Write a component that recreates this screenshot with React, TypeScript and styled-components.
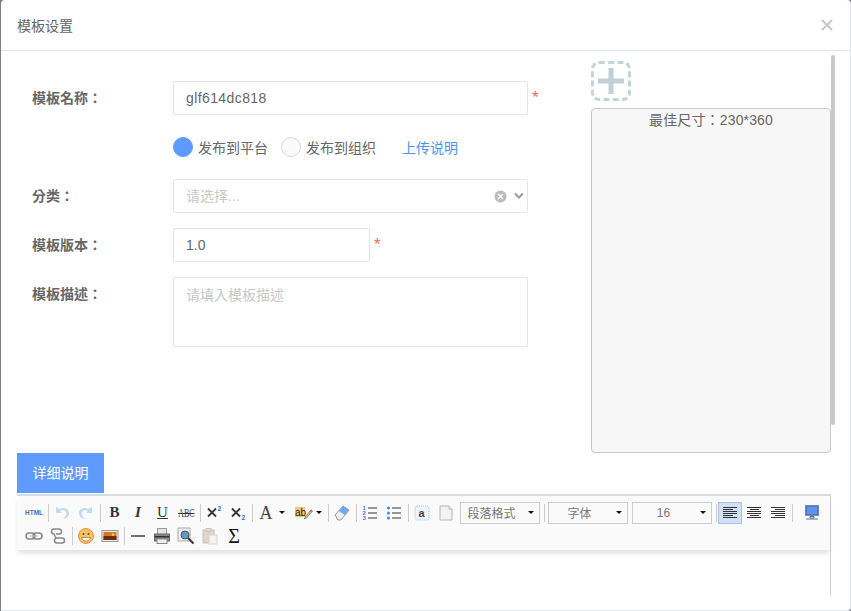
import React from 'react';
import styled, { createGlobalStyle } from 'styled-components';

const GlobalStyle = createGlobalStyle`
  html, body {
    margin: 0;
    height: 100%;
    overflow: hidden;
    background-color: #7f7f7f;
  }
  body {
    font-family: "Liberation Sans", "Noto Sans CJK TC", sans-serif;
    font-size: 14px;
    color: #666;
  }
`;

const Modal = styled.div`
  position: relative;
  box-sizing: border-box;
  width: 850px;
  height: 611px;
  margin-left: 1px;
  background-color: #fff;
  border-right: 1px solid #dfe5ef;
  border-bottom: 1px solid #dfe5ef;
  border-radius: 4px 4px 4px 0;
`;

const Header = styled.div`
  box-sizing: border-box;
  height: 51px;
  display: flex;
  align-items: center;
  justify-content: space-between;
  padding: 0 16px;
  border-bottom: 1px solid #dfe6ee;
`;

const Title = styled.div`
  font-size: 14px;
  color: #666;
`;

const Close = styled.svg`
  width: 12px;
  height: 12px;
  margin-right: 1px;
  stroke: #c8c8c8;
  stroke-width: 2;
`;

const Body = styled.div`
  position: relative;
  height: 402px;
  display: flex;
`;

const ScrollThumb = styled.div`
  position: absolute;
  top: 4px;
  left: 830px;
  width: 4px;
  height: 370px;
  background-color: #c9c9c9;
  border-radius: 2px;
`;

const Form = styled.div`
  width: 590px;
  box-sizing: border-box;
  padding: 30px 0 0 31px;
`;

const Row = styled.div`
  display: flex;
  align-items: center;
  height: 34px;
  margin-bottom: 15px;
`;

const TallRow = styled(Row)`
  height: 70px;
  align-items: flex-start;
`;

const Label = styled.label`
  flex: none;
  width: 141px;
  font-weight: bold;
  color: #666;
  line-height: 34px;
`;

const Input = styled.div<{ $width: number; $tracking?: number }>`
  box-sizing: border-box;
  width: ${(p) => p.$width}px;
  height: 34px;
  line-height: 32px;
  padding: 0 12px;
  border: 1px solid #e1e6ee;
  border-radius: 2px;
  color: #666;
  letter-spacing: ${(p) => p.$tracking ?? 0}px;
`;

const Star = styled.span`
  margin: 0 0 1px 4px;
  color: #f8685c;
  font-size: 17px;
  line-height: 17px;
`;

const Radios = styled.div`
  display: flex;
  align-items: center;
  margin-left: 141px;
`;

const Radio = styled.span<{ $on?: boolean }>`
  box-sizing: border-box;
  width: 20px;
  height: 20px;
  margin-right: 5px;
  border-radius: 50%;
  border: 1px solid ${(p) => (p.$on ? '#5f9bff' : '#d9d9d9')};
  background-color: ${(p) => (p.$on ? '#5f9bff' : '#fafafa')};
`;

const RadioText = styled.span`
  margin-right: 13px;
  color: #666;
`;

const HelpLink = styled.a`
  margin-left: 13px;
  color: #4b94f5;
`;

const Select = styled(Input)`
  display: flex;
  align-items: center;
  justify-content: space-between;
  color: #c8c8c8;
  padding-right: 3px;
`;

const SelectIcons = styled.div`
  display: flex;
  align-items: center;
  gap: 7px;
`;

const TextArea = styled.div`
  box-sizing: border-box;
  width: 355px;
  height: 70px;
  padding: 6px 12px;
  border: 1px solid #e1e6ee;
  border-radius: 2px;
  color: #c8c8c8;
`;

const Side = styled.div`
  width: 240px;
  padding-top: 10px;
`;

const AddBox = styled.div`
  box-sizing: border-box;
  width: 40px;
  height: 40px;
  margin-bottom: 7px;
  border: 3px dashed #c3d4da;
  border-radius: 8px;
  display: flex;
  align-items: center;
  justify-content: center;
`;

const Preview = styled.div`
  box-sizing: border-box;
  height: 345px;
  background-color: #f7f7f7;
  border: 1px solid #c8c8c8;
  border-radius: 4px;
  text-align: center;
  color: #666;
  line-height: 22px;
  letter-spacing: 0.15px;
`;

const Tab = styled.div`
  width: 87px;
  height: 40px;
  margin-left: 16px;
  line-height: 40px;
  text-align: center;
  color: #fff;
  background-color: #5f9bff;
`;

const Editor = styled.div`
  box-sizing: border-box;
  width: 814px;
  height: 102px;
  margin: 1px 0 0 16px;
  border-top: 2px solid #d8dbe0;
  border-right: 1px solid #cfcfcf;
`;

const Toolbar = styled.div`
  box-sizing: border-box;
  height: 54px;
  padding: 5px 0 0 5px;
  background-color: #fafafa;
  box-shadow: 0 4px 5px -1px rgba(0, 0, 0, 0.13);
`;

const ToolRow = styled.div`
  display: flex;
  align-items: center;
  height: 23px;
`;

const Tool = styled.div<{ $active?: boolean; $wide?: boolean; $gap?: number; $offset?: number }>`
  box-sizing: border-box;
  flex: none;
  width: ${(p) => (p.$wide ? 36 : 24)}px;
  height: 22px;
  margin-left: ${(p) => p.$offset ?? 0}px;
  display: flex;
  align-items: center;
  justify-content: center;
  gap: ${(p) => p.$gap ?? 3}px;
  background-color: ${(p) => (p.$active ? '#d3e0f4' : 'transparent')};
  border: 1px solid ${(p) => (p.$active ? '#a6c3ea' : 'transparent')};
`;

const Sep = styled.div`
  flex: none;
  width: 1px;
  height: 18px;
  margin: 0 1px 0 2px;
  background-color: #ccc;
`;

const Glyph = styled.span<{ $size?: number; $color?: string; $nudge?: number }>`
  font-family: "Liberation Serif", serif;
  font-weight: bold;
  font-size: ${(p) => p.$size ?? 15}px;
  line-height: 1;
  color: ${(p) => p.$color ?? '#333'};
  margin-left: ${(p) => p.$nudge ?? 0}px;
`;

const ItalicGlyph = styled(Glyph)`
  font-style: italic;
`;

const UnderGlyph = styled(Glyph)`
  text-decoration: underline;
  font-weight: normal;
`;

const LightGlyph = styled(Glyph)`
  font-weight: normal;
`;

const StrikeGlyph = styled(Glyph)`
  display: inline-block;
  flex: none;
  text-decoration: line-through;
  font-weight: normal;
  transform: scaleX(0.66);
`;

const HtmlGlyph = styled.span`
  font-family: "Liberation Sans", sans-serif;
  font-weight: bold;
  font-size: 6.5px;
  color: #3f74a8;
`;

const Caret = styled.span`
  width: 0;
  height: 0;
  border-left: 3px solid transparent;
  border-right: 3px solid transparent;
  border-top: 3px solid #111;
`;

const Combo = styled.div`
  box-sizing: border-box;
  flex: none;
  width: 80px;
  height: 22px;
  margin: 0 2px;
  padding: 0 5px 0 0;
  display: flex;
  align-items: center;
  border: 1px solid #ccc;
  font-size: 12px;
  color: #777;
`;

const ComboText = styled.span`
  flex: 1;
  text-align: center;
  padding-right: 6px;
`;

const Icon: React.FC<{ children: React.ReactNode }> = ({ children }) => (
  <svg width="18" height="18" viewBox="0 0 18 18" fill="none">
    {children}
  </svg>
);

const Undo = ({ flip }: { flip?: boolean }) => (
  <Icon>
    <g transform={flip ? 'matrix(-1 0 0 1 18 0)' : undefined}>
      <path d="M3 3v6h6L7 7c2-1.500 5-1 6 1 1 2 0 4-3 7 4-.500 6-3 6-6 0-4-5-6.500-9-4z" fill="#c4daed" />
    </g>
  </Icon>
);

const Super = ({ sub }: { sub?: boolean }) => (
  <Icon>
    <path d="M3 4.500l8 8M11 4.500l-8 8" stroke="#333" strokeWidth="1.800" />
    <text x="12.500" y={sub ? 16 : 6.500} fontSize="6.500" fontWeight="bold" fontFamily="Liberation Sans" fill="#2a6ae0">
      2
    </text>
  </Icon>
);

const Marker = () => (
  <Icon>
    <rect x="0" y="3" width="10" height="10" fill="#fbc56f" />
    <text x="0" y="12" fontSize="10" fontFamily="Liberation Sans" fill="#222">ab</text>
    <path d="M10 13l6-7 1.500 1-6 7-2 1z" fill="#e8c05a" stroke="#555" strokeWidth="0.6" />
    <path d="M15 7l1-1.500 1.500 1-1 1.500z" fill="#e55" />
  </Icon>
);

const Eraser = () => (
  <Icon>
    <path d="M2 11l8-9 6 4-8 10H5z" fill="#eee" stroke="#999" />
    <path d="M10 2l6 4-4 5-6-4z" fill="#6fa6ee" />
  </Icon>
);

const ListIcon = ({ dots }: { dots?: boolean }) => (
  <Icon>
    {dots ? (
      <g fill="#4a82e8">
        <circle cx="3.500" cy="4" r="1.500" />
        <circle cx="3.500" cy="9" r="1.500" />
        <circle cx="3.500" cy="14" r="1.500" />
      </g>
    ) : (
      <g fill="#3d7ae6" fontSize="6" fontWeight="bold" fontFamily="Liberation Sans">
        <text x="1.500" y="6">1</text>
        <text x="1.500" y="11">2</text>
        <text x="1.500" y="16">3</text>
      </g>
    )}
    <path d="M7 4h9M7 9h9M7 14h9" stroke="#333" strokeWidth="1" />
  </Icon>
);

const Anchor = () => (
  <Icon>
    <rect x="2" y="2" width="14" height="14" rx="2" stroke="#9dbcf0" strokeDasharray="1 1" fill="#eef3fb" />
    <text x="5.500" y="13" fontSize="11" fontWeight="bold" fontFamily="Liberation Sans" fill="#444">a</text>
  </Icon>
);

const Page = () => (
  <Icon>
    <path d="M3 2h9l3 3v11H3z" fill="#f2f3f6" stroke="#b5b5b5" />
    <path d="M12 2v3h3" stroke="#b5b5b5" fill="#fff" />
  </Icon>
);

const AlignIcon = ({ mode }: { mode: 'left' | 'center' | 'right' }) => {
  const short = { left: 'M2 5.500h10M2 11.500h10', center: 'M5 5.500h9M5 11.500h9', right: 'M6 5.500h10M6 11.500h10' }[mode];
  return (
    <Icon>
      <path d="M2 3.500h14M2 7.500h14M2 9.500h14M2 13.500h14" stroke="#333" />
      <path d={short} stroke="#333" />
    </Icon>
  );
};

const Monitor = () => (
  <Icon>
    <rect x="2.500" y="1.500" width="13" height="10" fill="#4a78d4" stroke="#7b8a9e" />
    <rect x="4" y="3" width="10" height="7" fill="#5f92e8" />
    <path d="M7 12.500h4v1.500H7zM3 15h12" stroke="#5c7390" />
  </Icon>
);

const LinkIcon = () => (
  <Icon>
    <rect x="1" y="6" width="9" height="6" rx="3" stroke="#888" strokeWidth="1.500" />
    <rect x="8" y="6" width="9" height="6" rx="3" stroke="#888" strokeWidth="1.500" />
    <path d="M5 9h8" stroke="#bbb" />
  </Icon>
);

const Unlink = () => (
  <Icon>
    <path d="M5 2h5a2.500 2.500 0 0 1 0 5H7M8 11h5a2.500 2.500 0 0 1 0 5H8a2.500 2.500 0 0 1 0-5" stroke="#888" strokeWidth="1.500" />
    <path d="M5 2a2.500 2.500 0 0 0 0 5l2 4" stroke="#888" strokeWidth="1.500" />
  </Icon>
);

const Smile = () => (
  <Icon>
    <circle cx="9" cy="9" r="7.500" fill="#f6c168" stroke="#dd9436" />
    <circle cx="6.500" cy="7" r="1" fill="#7a4a10" />
    <circle cx="11.500" cy="7" r="1" fill="#7a4a10" />
    <path d="M4.500 10.500h9c-.500 2.500-2 3.500-4.500 3.500s-4-1-4.500-3.500z" fill="#fff" stroke="#a76a1e" strokeWidth="0.7" />
  </Icon>
);

const Picture = () => (
  <Icon>
    <rect x="1" y="3.500" width="16" height="11" fill="#eee" stroke="#999" />
    <rect x="2.500" y="5" width="13" height="8" fill="#d9761f" />
    <rect x="2.500" y="9" width="13" height="4" fill="#6b2d0c" />
    <circle cx="12" cy="7.500" r="1.200" fill="#ffd47a" />
  </Icon>
);

const Rule = () => (
  <Icon>
    <path d="M2 9h14" stroke="#222" strokeWidth="1.300" />
  </Icon>
);

const Printer = () => (
  <Icon>
    <rect x="4.500" y="1.500" width="9" height="6" fill="#e6e6e6" stroke="#999" />
    <rect x="1.500" y="7" width="15" height="7" fill="#888" stroke="#666" />
    <rect x="1.500" y="9" width="15" height="1.500" fill="#333" />
    <rect x="4" y="12" width="10" height="4.500" fill="#eee" stroke="#888" />
  </Icon>
);

const Preview2 = () => (
  <Icon>
    <rect x="1" y="1" width="12" height="13" fill="#eef1f4" stroke="#aaa" />
    <circle cx="8" cy="8" r="4" fill="#5a9bc8" stroke="#555" />
    <path d="M11 11l5.500 5.500" stroke="#333" strokeWidth="2" />
  </Icon>
);

const Paste = () => (
  <Icon>
    <rect x="2" y="3" width="11" height="13" fill="#e4d3c8" stroke="#cbbdb3" />
    <rect x="5" y="1.500" width="5" height="3" fill="#ddd" stroke="#c5c5c5" />
    <rect x="8" y="8" width="8" height="9" fill="#f3f3f3" stroke="#d6d6d6" />
  </Icon>
);

const App: React.FC = () => (
  <Modal>
    <GlobalStyle />
    <Header>
      <Title>模板设置</Title>
      <Close viewBox="0 0 12 12">
        <path d="M1 1l10 10M11 1L1 11" />
      </Close>
    </Header>

    <Body>
      <Form>
        <Row>
          <Label>模板名称：</Label>
          <Input $width={355} $tracking={0.4}>glf614dc818</Input>
          <Star>*</Star>
        </Row>
        <Row>
          <Radios>
            <Radio $on />
            <RadioText>发布到平台</RadioText>
            <Radio />
            <RadioText>发布到组织</RadioText>
            <HelpLink>上传说明</HelpLink>
          </Radios>
        </Row>
        <Row>
          <Label>分类：</Label>
          <Select $width={355}>
            请选择...
            <SelectIcons>
              <svg width="13" height="13" viewBox="0 0 13 13">
                <circle cx="6.500" cy="6.500" r="6" fill="#bbb" />
                <path d="M4 4l5 5M9 4l-5 5" stroke="#fff" strokeWidth="1.500" />
              </svg>
              <svg width="10" height="8" viewBox="0 0 10 8" fill="none">
                <path d="M1 1.500l4 4 4-4" stroke="#999" strokeWidth="2" />
              </svg>
            </SelectIcons>
          </Select>
        </Row>
        <Row>
          <Label>模板版本：</Label>
          <Input $width={197}>1.0</Input>
          <Star>*</Star>
        </Row>
        <TallRow>
          <Label>模板描述：</Label>
          <TextArea>请填入模板描述</TextArea>
        </TallRow>
      </Form>

      <Side>
        <AddBox>
          <svg width="28" height="28" viewBox="0 0 28 28">
            <path d="M11.500 1h5v10.500H27v5H16.500V27h-5V16.500H1v-5h10.500z" fill="#bfd0d7" />
          </svg>
        </AddBox>
        <Preview>最佳尺寸：230*360</Preview>
      </Side>
      <ScrollThumb />
    </Body>

    <Tab>详细说明</Tab>

    <Editor>
      <Toolbar>
        <ToolRow>
          <Tool><HtmlGlyph>HTML</HtmlGlyph></Tool>
          <Sep />
          <Tool><Undo /></Tool>
          <Tool><Undo flip /></Tool>
          <Sep />
          <Tool><Glyph $nudge={1}>B</Glyph></Tool>
          <Tool><ItalicGlyph>I</ItalicGlyph></Tool>
          <Tool><UnderGlyph $nudge={1}>U</UnderGlyph></Tool>
          <Tool><StrikeGlyph $size={12} $nudge={1}>ABC</StrikeGlyph></Tool>
          <Sep />
          <Tool><Super /></Tool>
          <Tool><Super sub /></Tool>
          <Sep />
          <Tool $wide $gap={6}><LightGlyph $size={18} $color="#444">A</LightGlyph><Caret /></Tool>
          <Tool $wide><Marker /><Caret /></Tool>
          <Sep />
          <Tool><Eraser /></Tool>
          <Sep />
          <Tool><ListIcon /></Tool>
          <Tool><ListIcon dots /></Tool>
          <Sep />
          <Tool><Anchor /></Tool>
          <Tool><Page /></Tool>
          <Combo><ComboText>段落格式</ComboText><Caret /></Combo>
          <Sep />
          <Combo><ComboText>字体</ComboText><Caret /></Combo>
          <Combo><ComboText>16</ComboText><Caret /></Combo>
          <Sep />
          <Tool $active><AlignIcon mode="left" /></Tool>
          <Tool><AlignIcon mode="center" /></Tool>
          <Tool><AlignIcon mode="right" /></Tool>
          <Sep />
          <Tool $offset={6}><Monitor /></Tool>
        </ToolRow>
        <ToolRow>
          <Tool><LinkIcon /></Tool>
          <Tool><Unlink /></Tool>
          <Sep />
          <Tool><Smile /></Tool>
          <Tool><Picture /></Tool>
          <Sep />
          <Tool><Rule /></Tool>
          <Tool><Printer /></Tool>
          <Tool><Preview2 /></Tool>
          <Tool><Paste /></Tool>
          <Tool><LightGlyph $size={20} $color="#111">Σ</LightGlyph></Tool>
        </ToolRow>
      </Toolbar>
    </Editor>
  </Modal>
);

export default App;
